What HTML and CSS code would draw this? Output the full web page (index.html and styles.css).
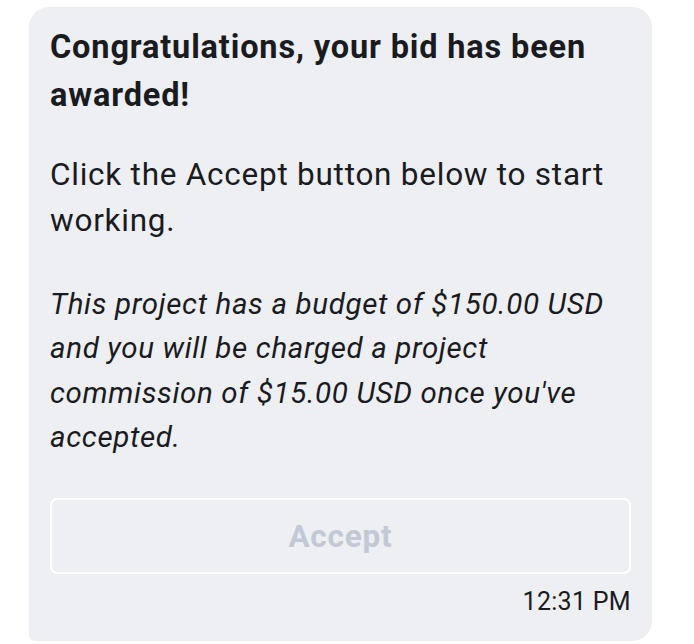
FILE: index.html
```html
<!DOCTYPE html>
<html lang="en">
<head>
  <meta charset="UTF-8" />
  <meta name="viewport" content="width=device-width, initial-scale=1.0"/>
  <title>Bid awarded</title>
  <link rel="stylesheet" href="styles.css">
</head>
<body>

<div class="message">
  <h2 class="message-title">Congratulations, your bid has been awarded!</h2>
  <p class="message-text">Click the Accept button below to start working.</p>
  <p class="message-note">This project has a budget of $150.00 USD and you will be charged a project commission of $15.00 USD once you've accepted.</p>
  <button class="accept-btn" disabled>Accept</button>
  <div class="message-time">12:31 PM</div>
</div>

</body>
</html>
```

FILE: styles.css
```css
/* --- base --- */
:root {
  --bubble-bg: #eeeff3;
  --text-base: #1a1b1f;
  --btn-text: #c2c9d5;
}
* {
  box-sizing: border-box;
  margin: 0;
  padding: 0;
}

body {
  font-family: Roboto, 'Noto Sans', sans-serif;
  background: #fff;
  color: var(--text-base);
  padding: 7px 42px 0 29px;
}

.message {
  background: var(--bubble-bg);
  border-radius: 20px 20px 20px 6px;
  padding: 16px 21px 0 21px;
  height: 634px;
  display: flex;
  flex-direction: column;
}

.message-title {
  font-size: 32.5px;
  line-height: 48px;
  font-weight: 700;
  letter-spacing: 0.85px;
}

.message-text {
  margin-top: 33px;
  font-size: 31.5px;
  line-height: 46px;
  letter-spacing: 0.75px;
}

.message-note {
  margin-top: 38px;
  font-size: 29.5px;
  line-height: 44.3px;
  font-style: italic;
  letter-spacing: 0.64px;
}

.accept-btn {
  margin-top: 39px;
  height: 76px;
  width: 100%;
  flex-shrink: 0;
  background: transparent;
  border: 2px solid #fff;
  border-radius: 7px;
  font-family: inherit;
  font-size: 31.5px;
  font-weight: 700;
  letter-spacing: 0.8px;
  color: var(--btn-text);
}

.message-time {
  margin-top: 13px;
  text-align: right;
  font-size: 25px;
  line-height: 30px;
  letter-spacing: 0.3px;
}
```
